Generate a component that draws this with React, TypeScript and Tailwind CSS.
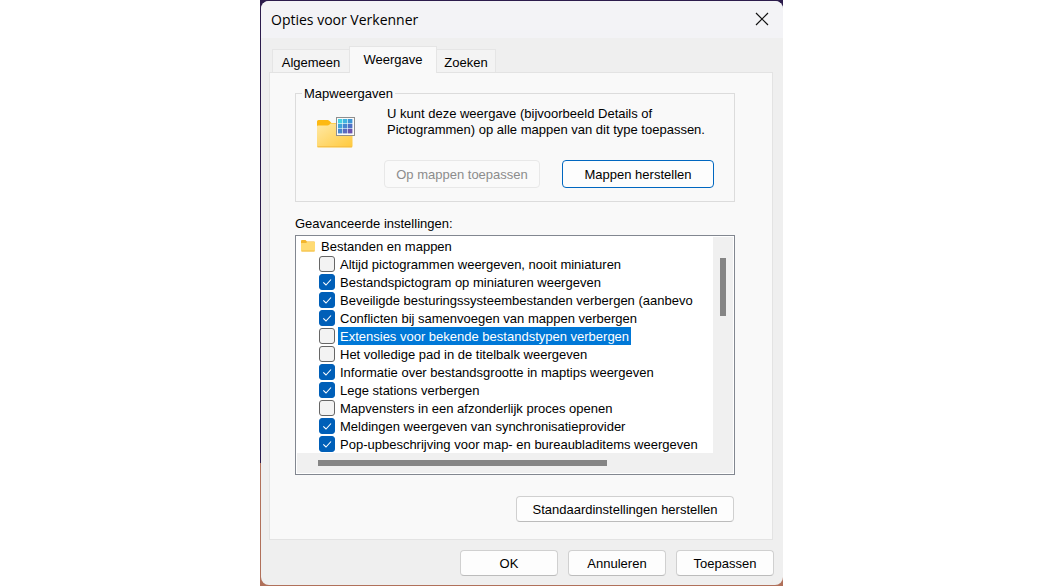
import { useState } from "react";
import type { ButtonHTMLAttributes } from "react";

type Setting = { id: string; label: string; checked: boolean };

const initialSettings: Setting[] = [
  { id: "icons-only", label: "Altijd pictogrammen weergeven, nooit miniaturen", checked: false },
  { id: "icon-on-thumb", label: "Bestandspictogram op miniaturen weergeven", checked: true },
  { id: "hide-system", label: "Beveiligde besturingssysteembestanden verbergen (aanbevo", checked: true },
  { id: "merge-conflicts", label: "Conflicten bij samenvoegen van mappen verbergen", checked: true },
  { id: "hide-extensions", label: "Extensies voor bekende bestandstypen verbergen", checked: false },
  { id: "full-path", label: "Het volledige pad in de titelbalk weergeven", checked: false },
  { id: "size-in-tips", label: "Informatie over bestandsgrootte in maptips weergeven", checked: true },
  { id: "empty-drives", label: "Lege stations verbergen", checked: true },
  { id: "separate-process", label: "Mapvensters in een afzonderlijk proces openen", checked: false },
  { id: "sync-notices", label: "Meldingen weergeven van synchronisatieprovider", checked: true },
  { id: "popup-desc", label: "Pop-upbeschrijving voor map- en bureaubladitems weergeven", checked: true },
];

const tileColors = ["#45d3e3", "#3fb4e0", "#3d95d6", "#3fa3da", "#4586cf", "#4e6fc4", "#4787cf", "#5a6ac0", "#6a52ae"];

function FolderViewIcon() {
  return (
    <svg width="40" height="34" viewBox="0 0 40 34" aria-hidden="true">
      <defs>
        <linearGradient id="folderFront" x1="0" y1="0" x2="1" y2="1">
          <stop offset="0" stopColor="#ffe9a6" />
          <stop offset="1" stopColor="#ffc93c" />
        </linearGradient>
      </defs>
      <path d="M1 5.500Q1 4 2.500 4H11.500Q12.500 4 13.300 4.800L15.500 7H35Q36 7 36 8V18H1Z" fill="#fdb913" />
      <path d="M1 10.500Q1 9.500 2 9.500H11.500Q12.500 9.500 13.300 8.700L14.500 7.500H35.500Q36.500 7.500 36.500 8.500V30Q36.500 31.500 35 31.500H2.500Q1 31.500 1 30Z" fill="url(#folderFront)" />
      <path d="M1.500 30.700H36" stroke="#f5bd45" strokeWidth="1" />
      <rect x="20.500" y="1.500" width="18" height="18" fill="#fbfbfb" stroke="#8f8f8f" />
      {tileColors.map((color, i) => (
        <rect key={color + i} x={22 + (i % 3) * 5} y={3 + Math.floor(i / 3) * 5} width="4.400" height="4.400" fill={color} />
      ))}
    </svg>
  );
}

function SmallFolderIcon() {
  return (
    <svg width="16" height="16" viewBox="0 0 16 16" aria-hidden="true">
      <path d="M1 3Q1 2 2 2H5.500L7 3.500H14Q15 3.500 15 4.500V9H1Z" fill="#f3b62e" />
      <path d="M1 5.500Q1 5 1.500 5H6L7.300 4H14.500Q15 4 15 4.500V12.500Q15 13.500 14 13.500H2Q1 13.500 1 12.500Z" fill="#ffdb73" />
      <path d="M1.500 13H14.500" stroke="#f2bd45" />
    </svg>
  );
}

function PushButton({ className = "", ...rest }: ButtonHTMLAttributes<HTMLButtonElement>) {
  return (
    <button
      type="button"
      className={`rounded border pt-0.5 leading-4 ${className}`}
      {...rest}
    />
  );
}

const plain = "border-[#d0d0d0] border-b-[#bcbcbc] bg-[#fdfdfd]";

export default function App() {
  const [settings, setSettings] = useState(initialSettings);
  const [selected, setSelected] = useState("hide-extensions");

  const toggle = (id: string) => {
    setSelected(id);
    setSettings((all) => all.map((s) => (s.id === id ? { ...s, checked: !s.checked } : s)));
  };

  return (
    <div className="min-h-screen bg-white pl-px font-['Liberation_Sans',Arial,sans-serif] text-[13px] leading-4 text-black">
      <div className="mx-auto w-full max-w-[523px] bg-linear-to-b from-[#2c1c4c] from-79% to-[#b0705a] to-79% py-px pl-px">
        <main className="rounded-lg bg-[#efefef]">
          <header className="flex h-[37px] items-center justify-between rounded-t-lg bg-[#f3f3f6] pr-3.5 pl-2.5">
            <h1 className="font-['Open_Sans','Noto_Sans',sans-serif] text-sm">Opties voor Verkenner</h1>
            <button type="button" aria-label="Sluiten" className="pb-0.5">
              <svg width="14" height="14" viewBox="0 0 14 14" aria-hidden="true">
                <path d="M1 1L13 13M13 1L1 13" stroke="#111" strokeWidth="1.200" fill="none" />
              </svg>
            </button>
          </header>

          <div className="pt-2 pr-2.5 pl-2">
            <div role="tablist" className="flex h-[26px] items-end pl-[3px]">
              <button type="button" role="tab" aria-selected="false" className="h-[23px] w-[77px] border border-r-0 border-b-0 border-[#e5e5e5] bg-[#f3f3f3] pt-1">
                Algemeen
              </button>
              <button type="button" role="tab" aria-selected="true" className="z-10 -mb-px h-[27px] w-[88px] border border-b-0 border-[#e5e5e5] bg-[#f9f9f9]">
                Weergave
              </button>
              <button type="button" role="tab" aria-selected="false" className="h-[23px] w-[59px] border border-b-0 border-l-0 border-[#e5e5e5] bg-[#f3f3f3] pt-1">
                Zoeken
              </button>
            </div>

            <section role="tabpanel" className="border border-[#e3e3e3] bg-[#f9f9f9] pt-[11px] pr-[37px] pb-[17px] pl-[25px]">
              <fieldset className="border border-[#dcdcdc] pb-[13px]">
                <legend className="ml-1.5 px-0.5 pt-0.5">Mapweergaven</legend>
                <div className="flex items-start gap-[31px] pt-1 pl-5">
                  <div className="pt-2.5">
                    <FolderViewIcon />
                  </div>
                  <p>
                    U kunt deze weergave (bijvoorbeeld Details of
                    <br />
                    Pictogrammen) op alle mappen van dit type toepassen.
                  </p>
                </div>
                <div className="flex justify-end gap-[22px] pt-2.5 pr-5">
                  <PushButton disabled className="h-7 w-39 border-[#e8e8e8] bg-[#fafafa] text-[#8c8c8c]">
                    Op mappen toepassen
                  </PushButton>
                  <PushButton className="h-7 w-38 border-[#0067c0] bg-[#fdfdfd]">Mappen herstellen</PushButton>
                </div>
              </fieldset>

              <h2 id="advanced" className="pt-3.5 pb-[3px]">Geavanceerde instellingen:</h2>
              <div className="border border-[#828790] bg-white p-px">
                <div className="flex">
                  <div role="group" aria-labelledby="advanced" className="min-w-0 flex-1 overflow-hidden">
                    <div className="flex h-[18px] items-center gap-[5px] pl-[3px]">
                      <SmallFolderIcon />
                      <span className="pt-px leading-[17px]">Bestanden en mappen</span>
                    </div>
                    <ul>
                      {settings.map((s) => (
                        <li key={s.id}>
                          <label className="flex h-[18px] items-center gap-[3px] pl-[22px]">
                            <span className="grid shrink-0">
                              <input
                                type="checkbox"
                                checked={s.checked}
                                onChange={() => toggle(s.id)}
                                className="peer col-start-1 row-start-1 size-4 appearance-none rounded-[3px] border border-[#666666] bg-[#f3f3f3] checked:border-[#005fb8] checked:bg-[#005fb8]"
                              />
                              <svg viewBox="0 0 16 16" className="pointer-events-none invisible col-start-1 row-start-1 size-4 peer-checked:visible" aria-hidden="true">
                                <path d="M4.300 8.300L7 11L12 5.500" stroke="#fff" strokeWidth="1.100" fill="none" />
                              </svg>
                            </span>
                            <span
                              className={
                                s.id === selected
                                  ? "bg-[#0078d7] px-0.5 pt-px leading-[17px] whitespace-nowrap text-white"
                                  : "px-0.5 pt-px leading-[17px] whitespace-nowrap"
                              }
                            >
                              {s.label}
                            </span>
                          </label>
                        </li>
                      ))}
                    </ul>
                  </div>
                  <div className="w-5 bg-[#f0f0f0] pt-[21px] pl-[7px]">
                    <div className="h-[58px] w-1.5 bg-[#858585]" />
                  </div>
                </div>
                <div className="h-5 bg-[#f0f0f0] pt-[7px] pl-[21px]">
                  <div className="h-1.5 w-[289px] bg-[#858585]" />
                </div>
              </div>

              <div className="flex justify-end pt-[21px] pr-px">
                <PushButton className={`h-[26px] w-[218px] ${plain}`}>Standaardinstellingen herstellen</PushButton>
              </div>
            </section>
          </div>

          <footer className="flex justify-end gap-2.5 pt-2.5 pr-[9px] pb-[9px]">
            <PushButton className={`h-[26px] w-[98px] ${plain}`}>OK</PushButton>
            <PushButton className={`h-[26px] w-[98px] ${plain}`}>Annuleren</PushButton>
            <PushButton className={`h-[26px] w-[98px] ${plain}`}>Toepassen</PushButton>
          </footer>
        </main>
      </div>
    </div>
  );
}
